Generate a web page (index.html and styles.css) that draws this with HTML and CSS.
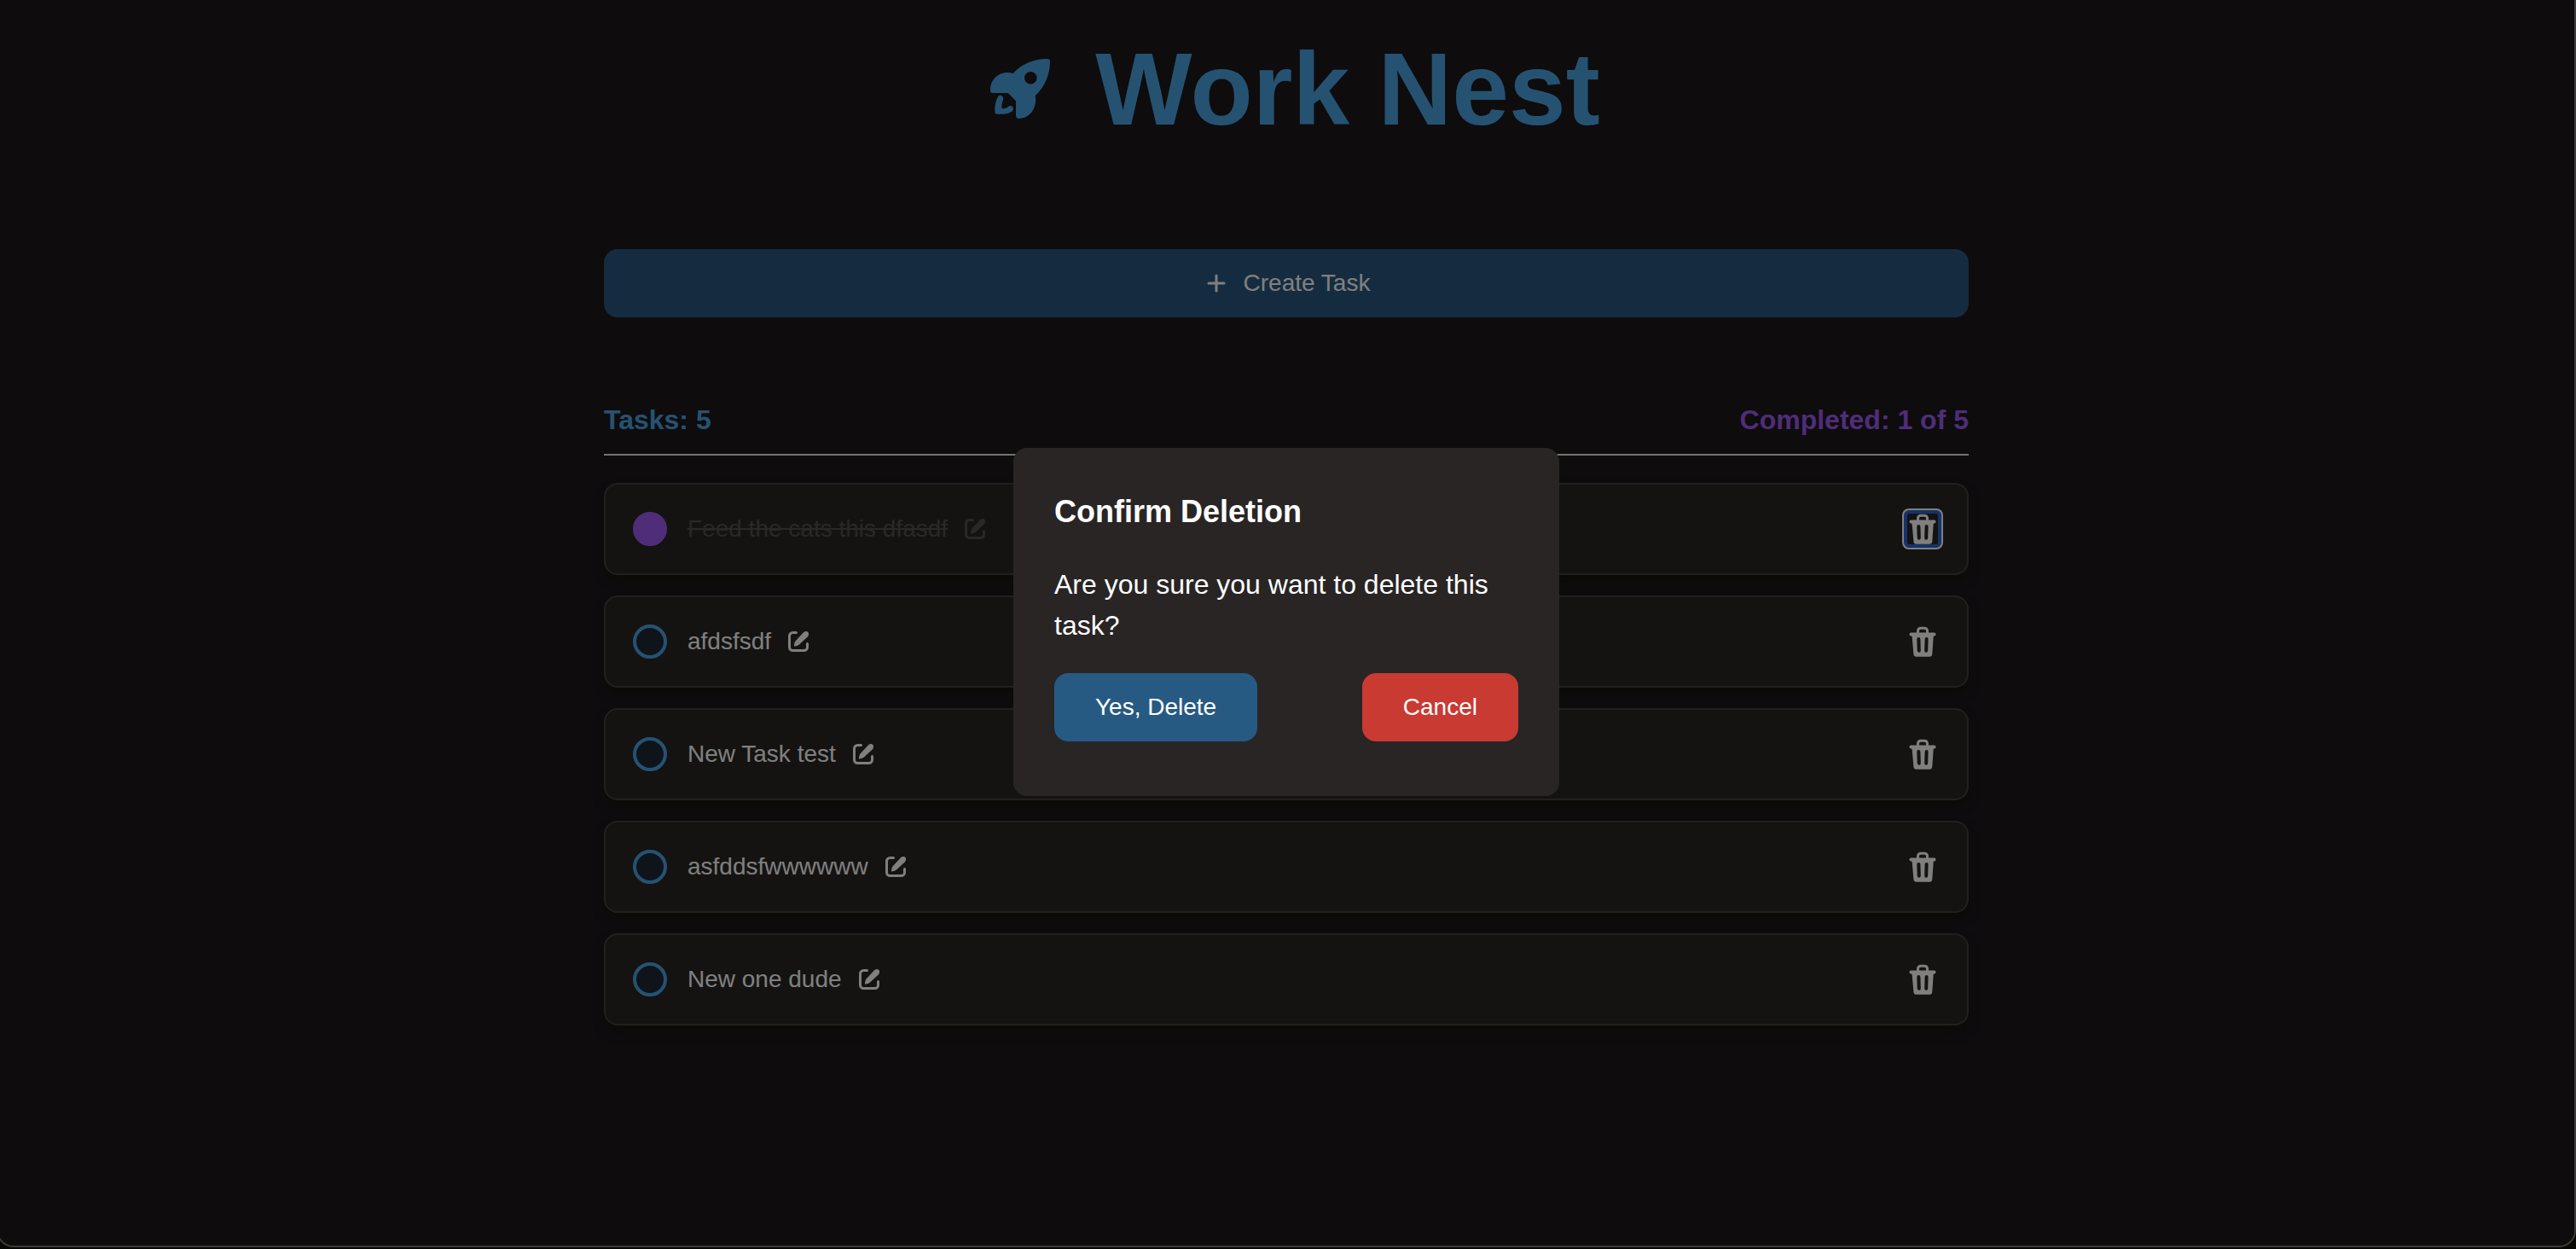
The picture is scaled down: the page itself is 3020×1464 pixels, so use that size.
FILE: index.html
```html
<!DOCTYPE html>
<html lang="en">
<head>
<meta charset="utf-8">
<meta name="viewport" content="width=device-width, initial-scale=1">
<title>Work Nest</title>
<link rel="stylesheet" href="styles.css">
</head>
<body>
<svg class="sprite" aria-hidden="true">
  <symbol id="rocket" viewBox="-30 -36 336 336">
    <path fill-rule="evenodd" d="M113 78C140 47 186 26 234 27Q243 27 243 36C243 80 226 124 191 157C198 194 178 234 136 237Q123 238 123 226V175L95 147H43Q33 147 33 137C33 96 68 66 113 78ZM175 72A22 22 0 1 0 175 116A22 22 0 1 0 175 72Z"/>
    <path d="M61 158C51 174 48 194 49 212Q49 221 58 221C78 223 95 220 108 213C119 205 113 189 100 192C90 201 82 203 74 201C72 194 74 184 78 170C81 157 67 151 61 158Z"/>
  </symbol>
  <symbol id="plus" viewBox="0 0 32 32">
    <path d="M16 7V25M7 16H25" fill="none" stroke="currentColor" stroke-width="3" stroke-linecap="round"/>
  </symbol>
  <symbol id="edit" viewBox="0 0 24 24">
    <path d="M9.500 1.500H5.500A4 4 0 0 0 1.500 5.500V18.500A4 4 0 0 0 5.500 22.500H18.500A4 4 0 0 0 22.500 18.500V14.500" fill="none" stroke="currentColor" stroke-width="3" stroke-linecap="round"/>
    <path d="M7 17.500Q6.800 14 8.500 11.500L18 1.300C19.800-.3 22.300-.3 23.400 1C24.500 2.400 24.200 4.800 22.700 6.500L13 15.500Q10 17.700 7 17.500Z"/>
  </symbol>
  <symbol id="trash" viewBox="0 0 40 40">
    <path d="M14.500 12V7.500A3.300 3.300 0 0 1 17.800 4.200H22.200A3.300 3.300 0 0 1 25.500 7.500V12" fill="none" stroke="currentColor" stroke-width="3"/>
    <path fill-rule="evenodd" d="M6.500 9.500H33.500A1.700 1.700 0 0 1 33.500 13.600L32.700 14L31.300 34.500Q31 37.700 28 37.700H12.500Q9.700 37.700 9.400 34.500L7.600 14L6.500 13.600A1.700 1.700 0 0 1 6.500 9.500ZM13.300 17Q13.300 15 15.300 15T17.400 17L17.800 30.500Q17.800 32.700 15.900 32.700T13.700 30.500ZM22.600 17Q22.600 15 24.600 15T26.600 17L26.200 30.500Q26 32.700 24.100 32.700T22.200 30.500Z"/>
  </symbol>
</svg>

<div class="window">
  <main class="app">
    <header class="header">
      <svg class="logo" aria-hidden="true"><use href="#rocket"/></svg>
      <h1 class="title">Work Nest</h1>
    </header>

    <button class="create" type="button"><svg class="create-icon" aria-hidden="true"><use href="#plus"/></svg>Create Task</button>

    <div class="summary">
      <span class="total">Tasks: 5</span>
      <span class="completed">Completed: 1 of 5</span>
    </div>

    <ul class="tasks">
      <li class="task done">
        <input class="check" type="checkbox" id="task1" checked>
        <label class="name" for="task1">Feed the cats this dfasdf</label>
        <button class="edit" type="button" aria-label="Edit task"><svg aria-hidden="true"><use href="#edit"/></svg></button>
        <button class="delete active" type="button" aria-label="Delete task"><svg aria-hidden="true"><use href="#trash"/></svg></button>
      </li>
      <li class="task">
        <input class="check" type="checkbox" id="task2">
        <label class="name" for="task2">afdsfsdf</label>
        <button class="edit" type="button" aria-label="Edit task"><svg aria-hidden="true"><use href="#edit"/></svg></button>
        <button class="delete" type="button" aria-label="Delete task"><svg aria-hidden="true"><use href="#trash"/></svg></button>
      </li>
      <li class="task">
        <input class="check" type="checkbox" id="task3">
        <label class="name" for="task3">New Task test</label>
        <button class="edit" type="button" aria-label="Edit task"><svg aria-hidden="true"><use href="#edit"/></svg></button>
        <button class="delete" type="button" aria-label="Delete task"><svg aria-hidden="true"><use href="#trash"/></svg></button>
      </li>
      <li class="task">
        <input class="check" type="checkbox" id="task4">
        <label class="name" for="task4">asfddsfwwwwww</label>
        <button class="edit" type="button" aria-label="Edit task"><svg aria-hidden="true"><use href="#edit"/></svg></button>
        <button class="delete" type="button" aria-label="Delete task"><svg aria-hidden="true"><use href="#trash"/></svg></button>
      </li>
      <li class="task">
        <input class="check" type="checkbox" id="task5">
        <label class="name" for="task5">New one dude</label>
        <button class="edit" type="button" aria-label="Edit task"><svg aria-hidden="true"><use href="#edit"/></svg></button>
        <button class="delete" type="button" aria-label="Delete task"><svg aria-hidden="true"><use href="#trash"/></svg></button>
      </li>
    </ul>
  </main>

  <div class="overlay">
    <section class="modal" role="dialog" aria-modal="true" aria-labelledby="modal-title">
      <h2 class="modal-title" id="modal-title">Confirm Deletion</h2>
      <p class="modal-text">Are you sure you want to delete this task?</p>
      <div class="modal-actions">
        <button class="btn confirm" type="button">Yes, Delete</button>
        <button class="btn cancel" type="button">Cancel</button>
      </div>
    </section>
  </div>
</div>
</body>
</html>
```
FILE: styles.css
```css
* {
  box-sizing: border-box;
}

body {
  margin: 0;
  padding-bottom: 2px;
  background: #080802;
  color: #fff;
  font-family: Arial, "Liberation Sans", sans-serif;
  font-size: 28px;
}

button {
  font: inherit;
  color: inherit;
  border: 0;
  padding: 0;
  background: none;
  cursor: pointer;
}

svg {
  display: block;
  fill: currentColor;
}

.sprite {
  display: none;
}

/* Application window, its left edge just outside the viewport */
.window {
  position: relative;
  min-height: calc(100vh - 2px);
  margin-left: -4px;
  border: 2px solid #3c3c3c;
  border-top: 0;
  border-radius: 0 0 20px 20px;
  background: #1c181b;
  overflow: hidden;
}

.app {
  max-width: 1600px;
  margin: 0 auto;
  padding: 48px 0;
}

.header {
  display: flex;
  justify-content: center;
  align-items: center;
  gap: 32px;
  margin-bottom: 132px;
  color: #4ca4e4;
}

.logo {
  width: 112px;
  height: 112px;
}

.title {
  margin: 0;
  font-size: 120px;
  line-height: 112px;
}

.create {
  display: flex;
  justify-content: center;
  align-items: center;
  gap: 16px;
  width: 100%;
  height: 80px;
  border-radius: 16px;
  background: #2a5880;
}

.create-icon {
  width: 32px;
  height: 32px;
}

.summary {
  display: flex;
  justify-content: space-between;
  margin: 96px 0 32px;
  padding-bottom: 16px;
  border-bottom: 2px solid #e4e4e0;
  font-size: 32px;
  font-weight: bold;
  line-height: 48px;
}

.total {
  color: #4ca4e4;
}

.completed {
  color: #9e5af0;
}

.tasks {
  display: flex;
  flex-direction: column;
  gap: 24px;
  margin: 0;
  padding: 0;
  list-style: none;
}

.task {
  display: flex;
  align-items: center;
  padding: 32px;
  border: 2px solid #42403e;
  border-radius: 16px;
  background: #292723;
  box-shadow: 0 8px 12px rgba(20, 20, 10, 0.5);
}

.check {
  appearance: none;
  width: 40px;
  height: 40px;
  margin: 0 24px 0 0;
  border: 4px solid #4ca4e4;
  border-radius: 50%;
  background: #1e2834;
}

.check:checked {
  border-color: #9e5af0;
  background: #9e5af0;
}

.name {
  margin-right: 20px;
  line-height: 40px;
}

.edit svg {
  width: 24px;
  height: 24px;
}

.done .name,
.done .edit {
  color: #52504e;
}

.done .name {
  text-decoration: line-through;
}

.delete {
  margin-left: auto;
  border-radius: 4px;
}

.delete svg {
  width: 40px;
  height: 40px;
}

.delete.active {
  outline: 4px solid #2b65d5;
  outline-offset: -2px;
  box-shadow: 0 0 0 4px #fff;
}

.overlay {
  position: absolute;
  inset: 0;
  display: flex;
  justify-content: center;
  align-items: center;
  padding-bottom: 2px;
  background: rgba(0, 0, 0, 0.5);
}

.modal {
  width: 640px;
  padding: 48px 48px 64px;
  border-radius: 16px;
  background: #292525;
}

.modal-title {
  margin: 0 0 34px;
  font-size: 36px;
  line-height: 54px;
}

.modal-text {
  margin: 0 0 32px;
  font-size: 32px;
  line-height: 48px;
}

.modal-actions {
  display: flex;
  justify-content: space-between;
}

.btn {
  height: 80px;
  padding: 0 48px;
  border-radius: 16px;
}

.confirm {
  background: #275a82;
}

.cancel {
  background: #c93a32;
}
```
